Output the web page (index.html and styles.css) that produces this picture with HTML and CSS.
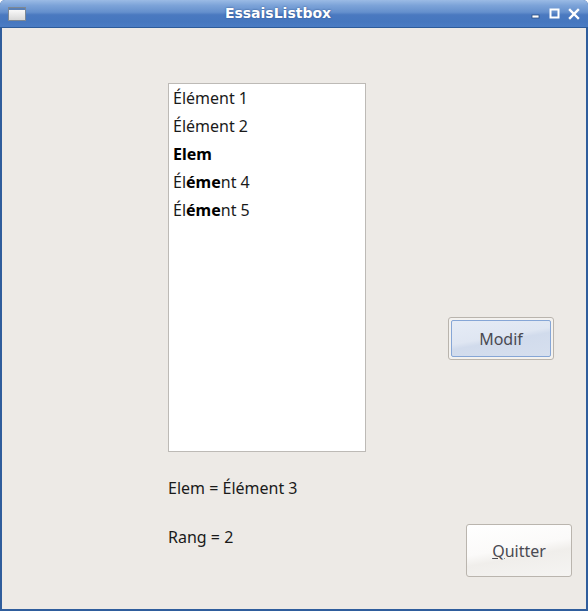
FILE: index.html
```html
<!DOCTYPE html>
<html>
<head>
<meta charset="utf-8">
<link rel="stylesheet" href="styles.css">
</head>
<body>
<div class="window">
  <div class="titlebar">
    <div class="appicon"><div class="appicon-bar"></div></div>
    <div class="title">EssaisListbox</div>
    <div class="controls">
      <svg width="10" height="10" viewBox="0 0 10 10" class="ctl"><rect x="1" y="6" width="7" height="3" fill="#fff" stroke="#2b4f80" stroke-width="0.8"/></svg>
      <svg width="11" height="11" viewBox="0 0 11 11" class="ctl"><rect x="1.5" y="1.5" width="8" height="8" fill="none" stroke="#fff" stroke-width="2"/></svg>
      <svg width="12" height="12" viewBox="0 0 12 12" class="ctl"><path d="M2 2 L10 10 M10 2 L2 10" stroke="#fff" stroke-width="2.4" stroke-linecap="square"/></svg>
    </div>
  </div>
  <div class="client">
    <div class="leftcol">
      <div class="listbox">
        <div class="item">Élément 1</div>
        <div class="item">Élément 2</div>
        <div class="item"><b>Elem</b></div>
        <div class="item">Él<b>éme</b>nt 4</div>
        <div class="item">Él<b>éme</b>nt 5</div>
      </div>
      <div class="label l1">Elem = Élément 3</div>
      <div class="label l2">Rang = 2</div>
    </div>
    <div class="rightcol">
      <div class="btn modif"><span>Modif</span></div>
      <div class="btn quit"><span><u>Q</u>uitter</span></div>
    </div>
  </div>
</div>
</body>
</html>
```
FILE: styles.css
```css
html, body {
  margin: 0;
  padding: 0;
  background: #ffffff;
}
body {
  width: 588px;
  height: 611px;
  overflow: hidden;
  font-family: "Noto Sans", "Open Sans", sans-serif;
}
.window {
  width: 588px;
  height: 611px;
  box-sizing: border-box;
  background: #2f5d9c;
  border-radius: 5px 5px 0 0;
  display: flex;
  flex-direction: column;
  padding: 0 2px 2px 2px;
}
.titlebar {
  height: 28px;
  margin: 0 -2px;
  border-radius: 5px 5px 0 0;
  background: linear-gradient(#9bbbe5 0%, #7ca3d8 20%, #6590cd 45%, #4a79c0 55%, #4677bf 80%, #4a7cc4 100%);
  display: flex;
  align-items: center;
  position: relative;
  border-bottom: 1px solid #2d5b9a;
  box-sizing: border-box;
}
.appicon {
  width: 18px;
  height: 14px;
  margin-left: 8px;
  margin-top: 1px;
  background: linear-gradient(#ffffff, #d8d8d8);
  border: 1px solid #7d8894;
  box-sizing: border-box;
}
.appicon-bar {
  height: 2px;
  background: #5a7fb4;
}
.title {
  position: absolute;
  left: 0;
  right: 32px;
  text-align: center;
  color: #ffffff;
  font-family: "DejaVu Sans", sans-serif;
  font-weight: bold;
  font-size: 14px;
  top: 5px;
  text-shadow: 0 0 2px #2a4f88;
}
.controls {
  margin-left: auto;
  margin-right: 8px;
  display: flex;
  align-items: center;
  gap: 8px;
  position: relative;
}
.ctl { display: block; }
.client {
  flex: 1;
  background: #edeae6;
  display: flex;
  padding: 0;
}
.leftcol {
  margin-left: 166px;
  padding-top: 55px;
  width: 198px;
}
.listbox {
  width: 198px;
  height: 369px;
  box-sizing: border-box;
  background: #ffffff;
  border: 1px solid #bdbab6;
  padding: 1px 4px;
}
.item {
  height: 28px;
  line-height: 26px;
  font-size: 16px;
  color: #1a1a1a;
}
.item b { color: #000; }
.label {
  font-size: 16px;
  color: #1a1a1a;
  line-height: 22px;
}
.l1 { margin-top: 25px; }
.l2 { margin-top: 27px; }
.rightcol {
  position: relative;
  flex: 1;
}
.btn {
  position: absolute;
  box-sizing: border-box;
  display: flex;
  align-items: center;
  justify-content: center;
  font-size: 16px;
  color: #4a4a52;
  border-radius: 3px;
}
.modif {
  left: 82px;
  top: 289px;
  width: 106px;
  height: 43px;
  border: 1px solid #b9b4ad;
  background: #f4f2ef;
  padding: 2px;
}
.modif span {
  flex: 1;
  align-self: stretch;
  display: flex;
  align-items: center;
  justify-content: center;
  border: 1px solid #86a6d6;
  border-radius: 2px;
  background: linear-gradient(170deg, #e6ecf6 0%, #dfe6f2 45%, #d1dbec 55%, #d6dfee 100%);
}
.quit {
  left: 100px;
  top: 496px;
  width: 106px;
  height: 53px;
  border: 1px solid #bab5ae;
  background: linear-gradient(170deg, #ffffff 0%, #fbfaf9 45%, #f0eeeb 60%, #f5f4f2 100%);
}
```
